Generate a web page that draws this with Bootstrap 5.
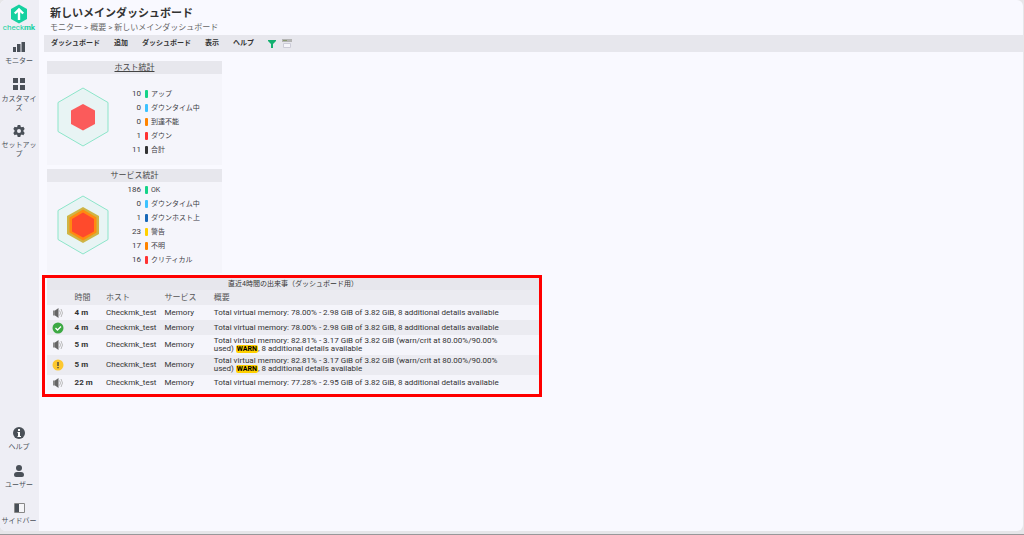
<!DOCTYPE html>
<html lang="ja">
<head>
<meta charset="utf-8">
<meta name="viewport" content="width=device-width, initial-scale=1">
<title>新しいメインダッシュボード</title>
<link href="https://cdn.jsdelivr.net/npm/bootstrap@5.3.0/dist/css/bootstrap.min.css" rel="stylesheet">
<style>
body{font-family:Roboto,"Noto Sans CJK JP",sans-serif;font-size:7px;line-height:9px;color:#3c3c44;background:#e6e6e9;border-bottom:1px solid #98989a}
.shell{background:#f9f9ff;border-radius:6px;margin:0 1px 3px 0;flex:1;overflow:hidden}
.side{flex:0 0 39px;background:#eeeef5;padding:4px 1px 5px 0}
.side a,.brand{color:#4a5058;text-decoration:none;text-align:center;display:flex;flex-direction:column;align-items:center}
.side a{line-height:9px}
.brand{color:#15d1a0;line-height:8px;font-size:8px}
.tops{gap:12px;margin-top:9px}
.bottoms{gap:13px}
.title-text{font-size:11px;line-height:16px;font-weight:700;margin:6px 0 0 11px;color:#333}
.trail{font-size:8px;margin:0 0 0 11px;line-height:11px;color:#666}
.trail a{color:inherit;text-decoration:none}
.bar{background:#e7e7ed;height:17px;margin:2px 0 9px 5px;padding-left:7px;gap:14px}
.bar button{border:0;background:none;padding:0;font-weight:700;color:#333;line-height:11px}
.tools{gap:6px}
.dash{padding-left:8px}
.panel{background:#f5f5fb;width:175px}
.panel h2{font-size:8px;line-height:13px;margin:0;text-align:center;background:#e7e7ed;color:#444;font-weight:400}
.panel h2 a{color:inherit}
.panel + .panel{margin-top:4px}
.panel-main{height:91px;padding:0 0 6px 10px}
.legend td{padding:0;height:14px;line-height:14px;vertical-align:middle}
.legend td:first-child{width:32px;text-align:right;font-size:8px}
.legend td:last-child{font-size:7px}
.host-legend{margin-top:10px}
.chip{display:block;width:3px;height:8px;border-radius:1px;margin:0 3px 0 4px}
.frame{border:3px solid red;width:500px;margin:2px 0 0 -5px;padding:0 0 4px 2px}
.events{width:100%;background:#f5f5fb;color:#333;font-size:8px}
.events caption{font-size:7px;line-height:12px;padding:0;text-align:center;background:#e7e7ed;color:#333;caption-side:top}
.events th{font-weight:400;color:#555;background:#ebebf1;height:15px;padding:0}
.events td{padding:0;height:15px;line-height:8px}
.events tr.even td{background:#ebebf1}
.events tr.tall td{height:20px}
.events td:nth-child(2){font-weight:700}
.events svg{display:block;margin-left:5px}
.warn{background:#ffd000;color:#000;font-weight:700;font-size:7px;border-radius:2px;padding:0 1px}
.g0{background:#15d389}.g1{background:#3cc2ff}.g2{background:#ff8400}.g3{background:#ff3232}.g4{background:#333}.g5{background:#1868b8}.g6{background:#ffd000}
</style>
</head>
<body class="d-flex flex-column min-vh-100 m-0">
<svg class="d-none" xmlns="http://www.w3.org/2000/svg">
<symbol id="speaker" viewBox="0 0 12 12"><path d="M1 3.500h2v5H1z" fill="#888"/><path d="M3 3.500l3.500-2.500v10L3 8.500z" fill="#666"/><path d="M7.500 3.500q2 2.500 0 5M9 2q3 4 0 8" fill="none" stroke="#bbb"/></symbol>
</svg>
<div class="shell d-flex">
<nav class="side d-flex flex-column">
 <div class="brand"><svg width="18" height="20" viewBox="0 0 18 20"><path d="M9 .500l8 4.500v10l-8 4.500L1 15V5z" fill="#15d1a0"/><path d="M9 16V6M4.800 9.500L9 5.500l4.200 4" fill="none" stroke="#fff" stroke-width="2.400"/></svg><span>check<b>mk</b></span></div>
 <div class="tops d-flex flex-column">
 <a href="#"><svg class="mb-1" width="12" height="12" viewBox="0 0 12 12" fill="#4a5058"><path d="M0 6h3v5H0zM4 3h3.500v8H4zM8.500 1H12v10H8.500z"/></svg>モニター</a>
 <a href="#"><svg class="mb-1" width="12" height="13" viewBox="0 0 12 13" fill="#4a5058"><path d="M0 0h5v5H0zM7 0h5v5H7zM0 7h5v5H0zM7 7h5v5H7z"/></svg>カスタマイ<br>ズ</a>
 <a href="#"><svg class="mb-1" width="12" height="12" viewBox="0 0 12 12"><path d="M4.700 0h2.600l.4 1.700 1 .6 1.700-.5 1.300 2.200-1.200 1.300v1.300l1.200 1.300-1.300 2.300-1.700-.6-1 .7-.4 1.700H4.700l-.4-1.700-1-.7-1.700.6L.3 7.900l1.200-1.300V5.300L.3 4l1.300-2.200 1.700.5 1-.6zM6 4a2 2 0 100 4 2 2 0 000-4z" fill="#4a5058" fill-rule="evenodd"/></svg>セットアッ<br>プ</a>
 </div>
 <div class="bottoms d-flex flex-column mt-auto">
 <a href="#"><svg class="mb-1" width="12" height="12" viewBox="0 0 12 12"><circle cx="6" cy="6" r="6" fill="#4a5058"/><path d="M5 2h2v2H5zM4.500 5H7v4h1v1H4.500V9H5V6h-.5z" fill="#fff"/></svg>ヘルプ</a>
 <a href="#"><svg class="mb-1" width="12" height="12" viewBox="0 0 12 12" fill="#4a5058"><circle cx="6" cy="3" r="3"/><path d="M1 10q0-3 3-3h4q3 0 3 3 0 2-2 2H3q-2 0-2-2z"/></svg>ユーザー</a>
 <a href="#"><svg class="mb-1" width="11" height="10" viewBox="0 0 11 10"><path d="M.5.500h10v9H.5z" fill="#f5f5f8" stroke="#888"/><path d="M1 1h4v8H1z" fill="#4a5058"/></svg>サイドバー</a>
 </div>
</nav>
<main class="flex-grow-1">
 <h1 class="title-text">新しいメインダッシュボード</h1>
 <div class="trail"><a href="#">モニター</a> &gt; <a href="#">概要</a> &gt; <a href="#">新しいメインダッシュボード</a></div>
 <div class="bar d-flex align-items-center"><button>ダッシュボード</button><button>追加</button><button>ダッシュボード</button><button>表示</button><button>ヘルプ</button>
 <div class="tools d-flex align-items-center"><button aria-label="フィルター"><svg class="d-block" width="8" height="8" viewBox="0 0 8 8"><path d="M0 0h8v1L5 4v4H3V4L0 1z" fill="#13b070"/></svg></button>
 <button aria-label="レイアウト"><svg class="d-block" width="10" height="10" viewBox="0 0 10 10"><path d="M0 0h10v3H0z" fill="#b4b4b4"/><path d="M1 1h4v1H1z" fill="#8a9a70"/><path d="M1.500 4.500h7v4h-7z" fill="#f5f5fa" stroke="#ccccd8"/></svg></button></div></div>
 <div class="dash">
 <section class="panel"><h2><a href="#">ホスト統計</a></h2><div class="panel-main d-flex align-items-center">
  <svg width="52" height="60" viewBox="0 0 52 60"><path d="M26 1l25 14.500v29L26 59 1 44.500v-29z" fill="#e8f4f4" stroke="#8ce5c9"/><path d="M26 17l12 6.500v13.500L26 43.500 14 37V23.500z" fill="#fb5b5b"/></svg>
  <table class="legend host-legend"><tr><td>10</td><td><span class="chip g0"></span></td><td>アップ</td></tr><tr><td>0</td><td><span class="chip g1"></span></td><td>ダウンタイム中</td></tr><tr><td>0</td><td><span class="chip g2"></span></td><td>到達不能</td></tr><tr><td>1</td><td><span class="chip g3"></span></td><td>ダウン</td></tr><tr><td>11</td><td><span class="chip g4"></span></td><td>合計</td></tr></table></div></section>
 <section class="panel"><h2>サービス統計</h2><div class="panel-main d-flex align-items-center">
  <svg width="52" height="60" viewBox="0 0 52 60"><path d="M26 1l25 14.500v29L26 59 1 44.500v-29z" fill="#e8f4f4" stroke="#8ce5c9"/><path d="M26 12l16 9v18l-16 9-16-9V21z" fill="#cfb545"/><path d="M26 14.500l13.500 8v15L26 45.500l-13.500-8v-15z" fill="#ff8a10"/><path d="M26 17.500l11 6.500v12.500L26 42.500 15 36.500V24z" fill="#ff4a2c"/></svg>
  <table class="legend"><tr><td>186</td><td><span class="chip g0"></span></td><td>OK</td></tr><tr><td>0</td><td><span class="chip g1"></span></td><td>ダウンタイム中</td></tr><tr><td>1</td><td><span class="chip g5"></span></td><td>ダウンホスト上</td></tr><tr><td>23</td><td><span class="chip g6"></span></td><td>警告</td></tr><tr><td>17</td><td><span class="chip g2"></span></td><td>不明</td></tr><tr><td>16</td><td><span class="chip g3"></span></td><td>クリティカル</td></tr></table></div></section>
 <div class="frame"><table class="events"><caption>直近4時間の出来事（ダッシュボード用）</caption>
 <colgroup><col style="width:5.6%"><col style="width:6.4%"><col style="width:11.9%"><col style="width:10%"><col></colgroup>
 <thead><tr><th></th><th>時間</th><th>ホスト</th><th>サービス</th><th>概要</th></tr></thead>
 <tbody>
 <tr><td><svg width="12" height="12"><use href="#speaker"/></svg></td><td>4 m</td><td>Checkmk_test</td><td>Memory</td><td>Total virtual memory: 78.00% - 2.98 GiB of 3.82 GiB, 8 additional details available</td></tr>
 <tr class="even"><td><svg width="12" height="12" viewBox="0 0 12 12"><circle cx="6" cy="6" r="5.500" fill="#3da944"/><path d="M3.500 6l2 2 3.500-3.500" fill="none" stroke="#fff" stroke-width="1.300"/></svg></td><td>4 m</td><td>Checkmk_test</td><td>Memory</td><td>Total virtual memory: 78.00% - 2.98 GiB of 3.82 GiB, 8 additional details available</td></tr>
 <tr class="tall"><td><svg width="12" height="12"><use href="#speaker"/></svg></td><td>5 m</td><td>Checkmk_test</td><td>Memory</td><td>Total virtual memory: 82.81% - 3.17 GiB of 3.82 GiB (warn/crit at 80.00%/90.00%<br>used) <span class="warn">WARN</span>, 8 additional details available</td></tr>
 <tr class="tall even"><td><svg width="12" height="12" viewBox="0 0 12 12"><circle cx="6" cy="6" r="5.500" fill="#fdc82f"/><path d="M5.300 3h1.400v4H5.300zM5.300 8h1.400v1.300H5.300z" fill="#444"/></svg></td><td>5 m</td><td>Checkmk_test</td><td>Memory</td><td>Total virtual memory: 82.81% - 3.17 GiB of 3.82 GiB (warn/crit at 80.00%/90.00%<br>used) <span class="warn">WARN</span>, 8 additional details available</td></tr>
 <tr><td><svg width="12" height="12"><use href="#speaker"/></svg></td><td>22 m</td><td>Checkmk_test</td><td>Memory</td><td>Total virtual memory: 77.28% - 2.95 GiB of 3.82 GiB, 8 additional details available</td></tr>
 </tbody></table></div>
 </div>
</main>
</div>
<script src="https://cdn.jsdelivr.net/npm/bootstrap@5.3.0/dist/js/bootstrap.bundle.min.js"></script>
</body>
</html>
